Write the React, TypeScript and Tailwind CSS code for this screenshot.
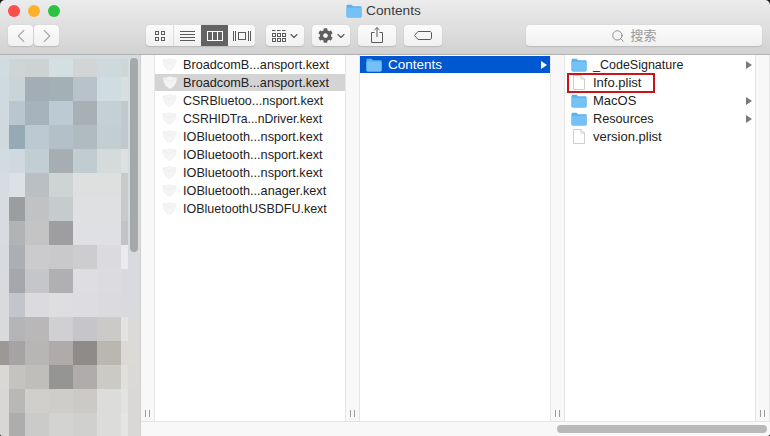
import React from 'react';
import { ChevronLeft, ChevronRight, ChevronDown, Search } from 'lucide-react';
import { FaCog } from 'react-icons/fa';

const mosaic = [
  ['d1dce1', 'cdd5d7', 'cdd3d2', 'd3dfe0', 'd2d5d6', 'ced9dd', 'd0d5d6', 'd4dde0'],
  ['cfdae0', 'c9d4d8', 'a3adb5', 'a3b1b7', 'b7c2cb', 'd0dde0', 'd9dfe0', 'd5dde0'],
  ['cfd9e0', 'b9c5cf', 'a7b3bc', 'bccad4', 'a6b0b5', 'c4d0d4', 'c1c9cc', 'd5dde0'],
  ['cfd9df', '96aab5', 'bcc9d2', 'b4c0c8', 'b0bbc0', 'c3ced2', 'c1c9cc', 'd5dce0'],
  ['d2dbe1', 'cfd9df', 'c1ced2', 'a6aeb3', 'c1ccd0', 'd5dadb', 'dde0e0', 'd6dce0'],
  ['d6dce1', 'dbe1e5', 'b9bfc3', 'ced3d4', 'dee0e0', 'dee0e0', 'c7cac9', 'd7dbdf'],
  ['d8dce0', '9a9ea1', 'c0c2c4', 'c6cbcd', 'dfe0e2', 'dfe0e2', 'c8c9cb', 'd8dbdf'],
  ['d8dbdf', 'b2b3b5', 'c4c4c4', '9e9ea0', 'dfe0e3', 'dfe0e3', 'c3c3c6', 'd8dadf'],
  ['d8dadf', 'abaeb2', 'cbcbce', 'c9c9cc', 'cdcdd0', 'dbdbdf', 'ebebed', 'd9dadd'],
  ['d8dade', 'a5a7ac', 'c5c6c9', 'b0b0b2', 'dedee2', 'dcdce0', 'd9dade', 'd9dadd'],
  ['d8dade', 'c2c5cb', 'dbdbdf', 'dedee1', 'dcdce1', 'dbdbdf', 'd9dade', 'd9dadd'],
  ['d9dadc', 'b5b5b8', 'b9b7b8', 'd0d0d2', 'c6c6ca', 'cbcac9', 'e3e3e3', 'dbdad9'],
  ['9c9896', 'a6a3a4', 'b8b5b5', 'b0abaa', '8f8b89', 'bab6b0', 'dcd8d5', 'dcdad6'],
  ['d9d8d6', 'c4c3c0', 'bfbebb', '959593', 'b0acac', 'cbcac5', 'dfdfdb', 'dad9d7'],
  ['d8d7d5', 'b8b8b6', 'd0cfcc', 'cecdc9', 'cbcac7', 'dcdcda', 'e3e3e1', 'd9d8d6'],
  ['d8d7d5', 'adadad', 'cbcbc9', 'd3d3d1', 'd0d0ce', 'dcdcda', 'e6e6e4', 'd9d8d6'],
];

const kexts = [
  { name: 'BroadcomB...ansport.kext', text: 'text-[12.7px]' },
  { name: 'BroadcomB...ansport.kext', text: 'text-[12.7px]' },
  { name: 'CSRBluetoo...nsport.kext', text: 'text-[12.5px]' },
  { name: 'CSRHIDTra...nDriver.kext', text: 'text-[12.2px]' },
  { name: 'IOBluetooth...nsport.kext', text: 'text-[12.7px]' },
  { name: 'IOBluetooth...nsport.kext', text: 'text-[12.7px]' },
  { name: 'IOBluetooth...nsport.kext', text: 'text-[12.7px]' },
  { name: 'IOBluetooth...anager.kext', text: 'text-[12.7px]' },
  { name: 'IOBluetoothUSBDFU.kext', text: 'text-[12.5px]' },
];

const contents = [
  { name: '_CodeSignature', folder: true, text: 'text-[12.5px]' },
  { name: 'Info.plist', folder: false, text: 'text-[13px]' },
  { name: 'MacOS', folder: true, text: 'text-[13px]' },
  { name: 'Resources', folder: true, text: 'text-[12.7px]' },
  { name: 'version.plist', folder: false, text: 'text-[13px]' },
];

function FolderIcon() {
  return (
    <svg viewBox="0 0 16 14" className="w-4 h-[14px]">
      <path d="M0.5 2.2C0.5 1.2 1 .8 1.8 .8H5.6L7 2.2H14.4C15.2 2.2 15.6 2.7 15.6 3.4V12.3C15.6 13 15.2 13.5 14.4 13.5H1.7C1 13.5 .5 13 .5 12.3Z" fill="#5cb0ec" />
      <path d="M.5 3.8H15.6V12.3C15.6 13 15.2 13.5 14.4 13.5H1.7C1 13.5 .5 13 .5 12.3Z" fill="#74c2f5" />
    </svg>
  );
}

function FileIcon() {
  return (
    <svg viewBox="0 0 12 15" className="w-3 h-[15px]">
      <path d="M.5 .5H8L11.5 4V14.5H.5Z" fill="#fff" stroke="#cfcfcf" />
      <path d="M8 .5V4H11.5" fill="#f3f3f3" stroke="#cfcfcf" />
    </svg>
  );
}

// the kext icon is a very pale shield, nearly no outline
function KextIcon({ big }: { big?: boolean }) {
  return (
    <svg viewBox="0 0 16 14" className={big ? 'w-4 h-[15px]' : 'w-[15px] h-[13px]'}>
      <path d="M8 .5C10 1.8 12.5 2 15 1.8C15.3 6.5 13 11 8 13.5C3 11 .7 6.5 1 1.8C3.5 2 6 1.8 8 .5Z" fill={big ? '#f4f4f4' : '#f5f5f5'} stroke={big ? '#dedede' : '#eeeeee'} strokeWidth="0.8" />
      <path d="M2.5 3.5L8 6L13.5 3.5" fill="none" stroke={big ? '#e4e4e4' : '#ebebeb'} strokeWidth="0.8" />
    </svg>
  );
}

function Arrow({ color = '#7a7a7a' }: { color?: string }) {
  return (
    <svg viewBox="0 0 6 8" className="w-[6px] h-2 shrink-0">
      <path d="M0 0L6 4L0 8Z" fill={color} />
    </svg>
  );
}

function Gutter({ first }: { first?: boolean }) {
  return (
    <div className={`${first ? 'w-[14px] border-r' : 'w-[15px] border-x'} shrink-0 bg-[#f8f8f8] border-[#e6e6e6] flex items-end justify-center gap-[3px] pb-[4px]`}>
      <div className="w-px h-[7px] bg-[#9c9c9c]" />
      <div className="w-px h-[7px] bg-[#9c9c9c]" />
    </div>
  );
}

function ToolButton({ className = '', children }: { className?: string; children: React.ReactNode }) {
  return (
    <div className={`h-[22px] bg-gradient-to-b from-[#fbfbfb] to-[#f1f1f1] rounded-[4px] border-b border-[#bcbcbc] shadow-[0_0_1px_rgba(0,0,0,0.2)] flex items-center justify-center ${className}`}>
      {children}
    </div>
  );
}

function Toolbar() {
  return (
    <div className="flex h-[22px] mt-[3px] pl-2 text-[#565656]">
      <ToolButton className="w-[25px] text-[#a9a9a9]">
        <ChevronLeft size={22} strokeWidth={1.2} />
      </ToolButton>
      <ToolButton className="w-[25px] ml-px text-[#a9a9a9]">
        <ChevronRight size={22} strokeWidth={1.2} />
      </ToolButton>

      <ToolButton className="w-[109px] ml-[87px] overflow-hidden !justify-start">
        <div className="w-[28px] h-full flex items-center justify-center border-r border-[#dcdcdc]">
          <svg viewBox="0 0 10 10" className="w-[10px] h-[10px]" fill="none" stroke="#5a5a5a">
            <rect x=".5" y=".5" width="3" height="3" />
            <rect x="6.5" y=".5" width="3" height="3" />
            <rect x=".5" y="6.5" width="3" height="3" />
            <rect x="6.5" y="6.5" width="3" height="3" />
          </svg>
        </div>
        <div className="w-[27px] h-full flex items-center justify-center">
          <svg viewBox="0 0 15 10" className="w-[15px] h-[10px]" stroke="#5a5a5a" strokeWidth="1">
            <path d="M0 .5H15M0 3.5H15M0 6.5H15M0 9.5H15" />
          </svg>
        </div>
        <div className="w-[27px] h-full flex items-center justify-center bg-[#636363]">
          <svg viewBox="0 0 16 10" className="w-4 h-[10px]" fill="none" stroke="#fff">
            <rect x=".5" y=".5" width="15" height="9" />
            <path d="M5.5 0V10M10.5 0V10" />
          </svg>
        </div>
        <div className="w-[27px] h-full flex items-center justify-center">
          <svg viewBox="0 0 18 10" className="w-[18px] h-[10px]" fill="none" stroke="#5a5a5a">
            <rect x="5.5" y="1.5" width="7" height="7" />
            <path d="M.5 0V10M2.5 0V10M15.5 0V10M17.5 0V10" />
          </svg>
        </div>
      </ToolButton>

      <ToolButton className="w-[38px] ml-[11px] gap-[4px]">
        <svg viewBox="0 0 14 12" className="w-[14px] h-3" fill="none" stroke="#5a5a5a">
          <path d="M0 .5H14" strokeDasharray="3.5 1.5" />
          <rect x=".5" y="3.5" width="3" height="3" />
          <rect x="5.5" y="3.5" width="3" height="3" />
          <rect x="10.5" y="3.5" width="3" height="3" />
          <rect x=".5" y="8.5" width="3" height="3" />
          <rect x="5.5" y="8.5" width="3" height="3" />
          <rect x="10.5" y="8.5" width="3" height="3" />
        </svg>
        <ChevronDown size={12} strokeWidth={2.2} className="-mx-[2px]" />
      </ToolButton>
      <ToolButton className="w-[38px] ml-2 gap-[4px]">
        <FaCog size={15} color="#5f5f5f" />
        <ChevronDown size={12} strokeWidth={2.2} className="-mx-[2px]" />
      </ToolButton>
      <ToolButton className="w-[38px] ml-2">
        <svg viewBox="0 0 12 16" className="w-3 h-4 -mt-[2px]" fill="none" stroke="#5a5a5a">
          <path d="M3.5 5.5H.5V15.5H11.5V5.5H8.5M6 10V.8M3.5 3L6 .6L8.5 3" />
        </svg>
      </ToolButton>
      <ToolButton className="w-[38px] ml-2">
        <svg viewBox="0 0 18 9" className="w-[18px] h-[9px]" fill="none" stroke="#5a5a5a">
          <path d="M4 .5H16C16.8 .5 17.5 1.2 17.5 2V7C17.5 7.8 16.8 8.5 16 8.5H4L.5 4.5Z" />
        </svg>
      </ToolButton>

      <ToolButton className="w-[236px] ml-[84px] gap-[5px] pr-[20px] text-[#9a9a9a]">
        <Search size={14} strokeWidth={1.3} className="text-[#6f6f6f]" />
        <span className="text-[13px] leading-none">搜索</span>
      </ToolButton>
    </div>
  );
}

function Sidebar() {
  return (
    <div className="relative w-[141px] shrink-0 overflow-hidden bg-[#d3dce1] pt-[4px] border-r border-[#cfcfcf]">
      <div className="grid grid-cols-[9px_16px_24px_24px_24px_24px_7px_13px] grid-rows-[18px_repeat(15,24px)]">
        {mosaic.flat().map((c, i) => (
          <div key={i} style={{ backgroundColor: `#${c}` }} />
        ))}
      </div>
      <div className="absolute left-[130px] top-[3px] w-2 h-[194px] rounded-full bg-[#a5a9aa]" />
    </div>
  );
}

export default function App() {
  return (
    <div className="w-[770px] h-[436px] bg-[#1a1a1a]" style={{ fontFamily: '"Liberation Sans", "Noto Sans CJK SC", sans-serif' }}>
      <div className="w-full h-full rounded-t-[5px] rounded-b-[3px] overflow-hidden flex flex-col text-[#222]">
        <div className="h-[55px] shrink-0 bg-gradient-to-b from-[#ececec] to-[#d2d2d2] border-b border-[#b2b2b2]">
          <div className="relative h-[22px] flex items-center justify-center gap-[4px] pr-[3px] text-[13.7px] text-[#3c3c3c]">
            <div className="absolute left-[8px] top-[5px] flex gap-[8px]">
              <div className="w-3 h-3 rounded-full bg-[#fc4f4c]" />
              <div className="w-3 h-3 rounded-full bg-[#fdb129]" />
              <div className="w-3 h-3 rounded-full bg-[#2bc33f]" />
            </div>
            <FolderIcon />
            <span>Contents</span>
          </div>
          <Toolbar />
        </div>

        <div className="flex flex-1 min-h-0">
          <Sidebar />
          <div className="flex-1 min-w-0 flex flex-col bg-white">
            <div className="flex flex-1 min-h-0">
              <Gutter first />
              <div className="w-[190px] shrink-0 pt-px">
                {kexts.map((k, i) => (
                  <div key={i} className={`h-[17px] mb-px flex items-center pl-[7px] ${i === 1 ? 'bg-[#d4d4d4]' : ''}`}>
                    <div className="w-[21px] shrink-0"><KextIcon big={i === 1} /></div>
                    <span className={`whitespace-nowrap self-start leading-[18px] ${k.text}`}>{k.name}</span>
                  </div>
                ))}
              </div>
              <Gutter />
              <div className="w-[190px] shrink-0 pt-px">
                <div className="h-[17px] flex items-center pl-[6px] pr-[3px] bg-[#0058d0] text-white">
                  <div className="w-[22px] shrink-0"><FolderIcon /></div>
                  <span className="flex-1 self-start leading-[18px] text-[13.5px]">Contents</span>
                  <Arrow color="#ffffff" />
                </div>
              </div>
              <Gutter />
              <div className="w-[190px] shrink-0 pt-px">
                {contents.map((item) => (
                  <div key={item.name} className="relative h-[17px] mb-px flex items-center pl-[6px] pr-[3px]">
                    <div className="w-[22px] shrink-0 flex justify-start">
                      {item.folder ? <FolderIcon /> : <span className="ml-[2px] flex"><FileIcon /></span>}
                    </div>
                    <span className={`flex-1 self-start leading-[18px] ${item.text}`}>{item.name}</span>
                    {item.folder && <Arrow />}
                    {item.name === 'Info.plist' && (
                      <div className="absolute left-[2px] -top-px w-[88px] h-[20px] border-2 border-[#c9141a]" />
                    )}
                  </div>
                ))}
              </div>
              <Gutter />
            </div>
            <div className="h-[15px] shrink-0 bg-[#f8f8f8] border-t border-[#e4e4e4] flex items-center justify-end pr-[3px]">
              <div className="w-[210px] h-2 rounded-full bg-[#b9b9b9]" />
            </div>
          </div>
        </div>
      </div>
    </div>
  );
}
